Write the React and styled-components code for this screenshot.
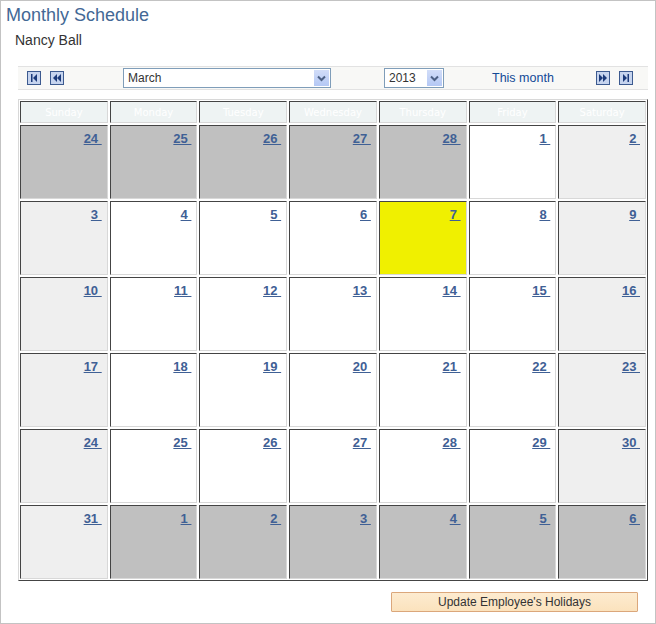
import React from 'react'
import styled, { createGlobalStyle } from 'styled-components'

const GlobalStyle = createGlobalStyle`
    html, body { margin: 0; padding: 0; background: #fff; }
    body { font-family: "Liberation Sans", Arial, sans-serif; }
`

const Frame = styled.div`
    width: 656px;
    height: 624px;
    box-sizing: border-box;
    border: 1px solid #c3c3c3;
    position: relative;
    overflow: hidden;
`
const Title = styled.h1`
    margin: 4px 0 0 5px;
    font-size: 18px;
    font-weight: normal;
    color: #436895;
    line-height: 20px;
`
const Employee = styled.div`
    margin: 7px 0 0 14px;
    font-size: 14px;
    color: #333;
    line-height: 16px;
`
const Toolbar = styled.div`
    margin: 18px 0 0 17px;
    width: 630px;
    height: 22px;
    box-sizing: content-box;
    border-top: 1px solid #e2e2e2;
    border-bottom: 1px solid #e2e2e2;
    background: #f8f8f6;
    display: flex;
    align-items: center;
`
const NavIcon = styled.span`
    display: inline-flex;
    width: 14px;
    height: 14px;
    margin-left: ${p => p.$ml}px;
`
const Select = styled.div`
    display: flex;
    align-items: center;
    width: ${p => p.$w}px;
    height: 20px;
    box-sizing: border-box;
    margin-left: ${p => p.$ml}px;
    border: 1px solid #7f9db9;
    background: #fff;
    font-size: 12px;
    color: #333;
    padding-left: 4px;
    span { flex: 1; }
`
const DropButton = styled.div`
    width: 15px;
    height: 16px;
    margin-right: 1px;
    background: linear-gradient(#d2ddf8, #b4c8f5);
    display: flex;
    align-items: center;
    justify-content: center;
`
const Link = styled.a`
    margin-left: ${p => p.$ml}px;
    font-size: 12.5px;
    color: #134a96;
    text-decoration: none;
`
const Calendar = styled.div`
    margin: 9px 0 0 17px;
    width: 630px;
    box-sizing: border-box;
    border: 1px solid;
    border-color: #d8d8d8 #444 #444 #d8d8d8;
    padding: 1px;
    display: grid;
    grid-template-columns: repeat(7, 1fr);
    grid-template-rows: 22px repeat(6, 74px);
    gap: 2px;
`
const HeadCell = styled.div`
    box-sizing: border-box;
    border: 1px solid;
    border-color: #444 #d8d8d8 #d8d8d8 #444;
    background: #eef3f3;
    color: #fff;
    font-family: "DejaVu Sans", Verdana, sans-serif;
    font-size: 10px;
    display: flex;
    align-items: center;
    justify-content: center;
`
const cellBg = { other: '#c0c0c0', weekend: '#efefef', day: '#fff', today: '#f0f000' }
const DayCell = styled.div`
    box-sizing: border-box;
    border: 1px solid;
    border-color: #444 #d8d8d8 #d8d8d8 #444;
    background: ${p => cellBg[p.$kind]};
    text-align: right;
    padding: 3px 5px 0 0;
`
const DayLink = styled.a`
    font-size: 13px;
    font-weight: bold;
    color: #3f6095;
    text-decoration: underline;
    white-space: pre;
`
const Footer = styled.div`
    display: flex;
    justify-content: flex-end;
    margin: 11px 17px 0 0;
`
const UpdateButton = styled.button`
    width: 247px;
    height: 20px;
    border: 1px solid #dba77b;
    border-radius: 1px;
    background: linear-gradient(#fdebd0, #fbe2bd);
    font-family: "Liberation Sans", Arial, sans-serif;
    font-size: 12px;
    color: #333;
    padding: 0;
`

const Icon = ({ type }) => (
    <svg width="14" height="14" viewBox="0 0 14 14">
        <rect x="0.5" y="0.5" width="13" height="13" fill="#c6d4ee" stroke="#3c5a8f" />
        {type === 'first' && <><rect x="4" y="3" width="1.5" height="8" fill="#1b3a7a" /><polygon points="10,3 10,11 6,7" fill="#1b3a7a" /></>}
        {type === 'prev' && <><polygon points="7,3 7,11 3,7" fill="#1b3a7a" /><polygon points="11,3 11,11 7,7" fill="#1b3a7a" /></>}
        {type === 'next' && <><polygon points="3,3 3,11 7,7" fill="#1b3a7a" /><polygon points="7,3 7,11 11,7" fill="#1b3a7a" /></>}
        {type === 'last' && <><polygon points="4,3 4,11 8,7" fill="#1b3a7a" /><rect x="8.5" y="3" width="1.5" height="8" fill="#1b3a7a" /></>}
    </svg>
)

const Chevron = () => (
    <svg width="9" height="7" viewBox="0 0 9 7">
        <path d="M1 1.5 L4.5 5 L8 1.5" fill="none" stroke="#4d6185" strokeWidth="2" />
    </svg>
)

const days = ['Sunday', 'Monday', 'Tuesday', 'Wednesday', 'Thursday', 'Friday', 'Saturday']

const buildWeeks = () => {
    const cells = []
    for (let d = 24; d <= 28; d++) cells.push({ n: d, kind: 'other' })
    for (let d = 1; d <= 31; d++) cells.push({ n: d, kind: 'cur' })
    for (let d = 1; d <= 6; d++) cells.push({ n: d, kind: 'other' })
    return cells.map((c, i) => {
        if (c.kind === 'other') return c
        const col = i % 7
        if (c.n === 7) return { ...c, kind: 'today' }
        return { ...c, kind: col === 0 || col === 6 ? 'weekend' : 'day' }
    })
}

const App = () => {
    const cells = buildWeeks()
    return (
        <Frame>
            <GlobalStyle />
            <Title>Monthly Schedule</Title>
            <Employee>Nancy Ball</Employee>
            <Toolbar>
                <NavIcon $ml={9}><Icon type="first" /></NavIcon>
                <NavIcon $ml={9}><Icon type="prev" /></NavIcon>
                <Select $w={208} $ml={59}><span>March</span><DropButton><Chevron /></DropButton></Select>
                <Select $w={60} $ml={53}><span>2013</span><DropButton><Chevron /></DropButton></Select>
                <Link href="#" $ml={48}>This month</Link>
                <NavIcon $ml={42}><Icon type="next" /></NavIcon>
                <NavIcon $ml={9}><Icon type="last" /></NavIcon>
            </Toolbar>
            <Calendar>
                {days.map(d => <HeadCell key={d}>{d}</HeadCell>)}
                {cells.map((c, i) => (
                    <DayCell key={i} $kind={c.kind}>
                        <DayLink href="#">{c.n + ' '}</DayLink>
                    </DayCell>
                ))}
            </Calendar>
            <Footer>
                <UpdateButton>Update Employee's Holidays</UpdateButton>
            </Footer>
        </Frame>
    )
}

export default App
